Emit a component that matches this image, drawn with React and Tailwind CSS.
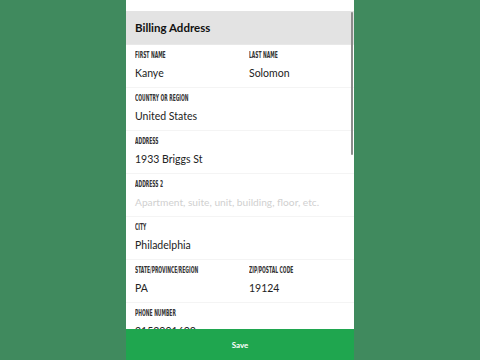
export default function App() {
  const rows = [
    [
      { label: "First Name", value: "Kanye" },
      { label: "Last Name", value: "Solomon" },
    ],
    [{ label: "Country or Region", value: "United States" }],
    [{ label: "Address", value: "1933 Briggs St" }],
    [{ label: "Address 2", placeholder: "Apartment, suite, unit, building, floor, etc." }],
    [{ label: "City", value: "Philadelphia" }],
    [
      { label: "State/Province/Region", value: "PA" },
      { label: "Zip/Postal Code", value: "19124" },
    ],
    [{ label: "Phone Number", value: "2152001603" }],
  ];

  return (
    <div className="w-[480px] h-[360px] bg-[#408a5e] flex justify-center overflow-hidden">
      <div className="relative w-[228px] h-[360px] bg-white flex flex-col overflow-hidden">
        <div className="h-[11px] shrink-0 bg-white" />
        <div className="h-[34px] shrink-0 bg-[#e3e3e3] flex items-center px-[9px] border-b border-[#e8e8e8]">
          <span className="font-['Lato',sans-serif] font-bold text-[11.5px] text-[#111]">
            Billing Address
          </span>
        </div>

        {rows.map((row, i) => (
          <div key={i} className="h-[43px] shrink-0 flex border-b border-[#f4f4f4]">
            {row.map((f) => (
              <div
                key={f.label}
                className={`${row.length > 1 ? "w-1/2" : "flex-1"} px-[9px] pt-[6px] flex flex-col`}
              >
                <span className="font-['DejaVu_Sans_Condensed','DejaVu_Sans',sans-serif] font-bold uppercase text-[8px] leading-[9px] text-[#333] [font-stretch:condensed] scale-x-[0.62] origin-left whitespace-nowrap">
                  {f.label}
                </span>
                {f.value ? (
                  <span className="mt-[7px] font-['Lato',sans-serif] text-[10.5px] leading-[13px] text-[#222]">
                    {f.value}
                  </span>
                ) : (
                  <span className="mt-[7px] font-['Lato',sans-serif] text-[10.2px] leading-[13px] text-[#d0d0d0] whitespace-nowrap">
                    {f.placeholder}
                  </span>
                )}
              </div>
            ))}
          </div>
        ))}

        <div className="absolute right-[1px] top-[12px] w-[2px] h-[143px] bg-[#8c8c8c] rounded-full" />

        <div className="absolute bottom-0 left-0 right-0 h-[31px] bg-[#1fa64f] flex items-center justify-center">
          <span className="font-['Lato',sans-serif] font-bold text-[8px] text-white">Save</span>
        </div>
      </div>
    </div>
  );
}
